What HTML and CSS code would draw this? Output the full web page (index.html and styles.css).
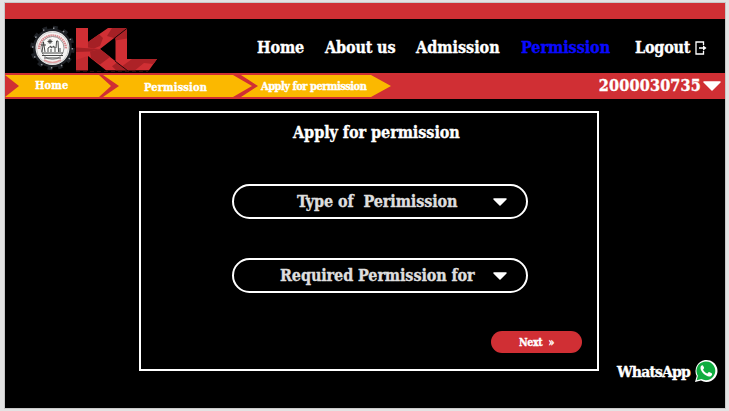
FILE: index.html
```
<!DOCTYPE html>
<html lang="en">
<head>
<meta charset="utf-8">
<title>Apply for permission</title>
<link rel="stylesheet" href="styles.css">
</head>
<body>
<div class="page">
  <div class="strip"></div>
  <header class="header">
    <svg class="logo" width="136" height="52" viewBox="26 20 136 52">
      <g fill="none" stroke="#1e2126"><circle cx="52.500" cy="48" r="17.500" stroke-width="4"/><circle cx="52.500" cy="48" r="20.200" stroke-width="4" stroke-dasharray="4.700 5.870"/></g>
      <circle cx="52.500" cy="48" r="19.800" fill="none" stroke="#92959a" stroke-width="1.400" stroke-dasharray="1.500 8.860"/>
      <circle cx="52.500" cy="48" r="17" fill="#f5f3f2"/>
      <circle cx="52.500" cy="48" r="16" fill="none" stroke="#b8babc" stroke-width=".7"/>
      <path d="M39 49a13.500 13.500 0 0 1 27 0" fill="none" stroke="#d98a8e" stroke-width="2.400" stroke-dasharray="1.500 .6"/>
      <path d="M44 60q8.500 5 17 0" fill="none" stroke="#dc9da0" stroke-width="1.600"/>
      <circle cx="52.500" cy="48" r="11.500" fill="#faf9f8" stroke="#777" stroke-width=".7"/>
      <path d="M42 53h21M42 55.500h21M44 58h17M42 52l1.500-10 1.500 10M41 45h5M48 52v-4l3-2v2l3-2v2h2l.6-7h1.400l.6 11M51 52v-3m4 3v-3m5 3v-4M50 39v5m-2.500-2.500h5M48.300 39.800l3.400 3.400m0-3.400l-3.400 3.400" fill="none" stroke="#343434" stroke-width=".9"/>
      <path d="M76 28h12v14l20-14h19L100 49l27 21.300h-21L88 56v14.300H76z" fill="#d02f34"/>
      <path d="M76 47.500l24 1.500-10 2.500-14 .5z" fill="#a52025"/>
      <path d="M88 42l11-7.700 4 3.700-3 8-6 2.500-6-1zM112 28h15l-13 10-7-2z" fill="#a52025"/>
      <path d="M100 49l10 8-10 7.500L91 58l-1-6.500zM117 62.500l10 7.800h-11l-4-4z" fill="#a52025"/>
      <path d="M76 60l12-4v14.300H76z" fill="#c02b30"/>
      <path d="M115.500 37.500L127 28.500V59h30l-8 11.300h-22L115.500 61.500z" fill="#d02f34"/>
      <path d="M115.500 37.500L127 28.500v10l-11.500 2zM142 59h15l-3.500 5-9.500-1zM132 59h10l2 4-9 7.300h-8l-5-4z" fill="#ad2227"/>
      <path d="M127.500 28L114 38.500M115 61l13 10" fill="none" stroke="#180507" stroke-width=".9"/>
      <path d="M76 71.500h72" stroke="#2a0d10" stroke-width="1" stroke-dasharray="4 3"/>
    </svg>
    <nav class="nav">
      <a class="home">Home</a><a class="about">About us</a><a class="admission">Admission</a><a class="permission">Permission</a><a class="logout">Logout</a>
      <svg class="exit" width="12" height="14" viewBox="0 0 12 14" fill="none" stroke="#fff" stroke-width="1.300"><path d="M8.500 4V1H1v12h7.500v-3M4 7h6"/><path d="M8 4.200L11.500 7 8 9.800z" fill="#fff" stroke="none"/></svg>
    </nav>
  </header>
  <div class="bar">
    <ol class="crumbs">
      <li class="crumb first"><span>Home</span></li>
      <li class="crumb second"><span>Permission</span></li>
      <li class="crumb third"><span>Apply for permission</span></li>
    </ol>
    <div class="user"><span>2000030735</span><svg width="18" height="10" viewBox="0 0 18 10"><path d="M1 1h16L9 9z" fill="#fff" stroke="#fff" stroke-width="1.500" stroke-linejoin="round"/></svg></div>
  </div>
  <main class="panel">
    <h1><span>Apply for permission</span></h1>
    <div class="select type"><span>Type of&nbsp; Perimission</span><svg width="14" height="8" viewBox="0 0 14 8"><path d="M1 1h12L7 7z" fill="#fff" stroke="#fff" stroke-width="1.500" stroke-linejoin="round"/></svg></div>
    <div class="select required"><span>Required Permission for</span><svg width="14" height="8" viewBox="0 0 14 8"><path d="M1 1h12L7 7z" fill="#fff" stroke="#fff" stroke-width="1.500" stroke-linejoin="round"/></svg></div>
    <button class="next">Next&nbsp; »</button>
  </main>
  <div class="whatsapp"><span>WhatsApp</span>
    <svg width="24" height="24" viewBox="0 0 24 24"><path d="M1 23l1.700-6A11 11 0 1 1 7 21.500z" fill="#fff"/><path d="M2.700 21.300l1.200-4.500a9.400 9.400 0 1 1 3.500 3.300z" fill="#10ad40"/><path d="M8.300 6.300c-.7 0-2 1.200-1.800 3 .5 3.700 5 8 8.600 8.200 1.800 0 3-1.200 3-2.600 0-.6-2.700-1.900-3.200-1.800-.6.200-1 1.600-1.600 1.500-1.700-.5-3.500-2.200-4.200-3.800 0-.5 1-1.200 1-1.700 0-.6-1-2.800-1.800-2.800z" fill="#fff"/></svg>
  </div>
</div>
</body>
</html>
```
FILE: styles.css
```
* { box-sizing: border-box; }
body {
  margin: 0;
  padding: 3px 4px 3px 5px;
  height: 411px;
  background: #e3e3e3;
  color: #fff;
  font: bold 16px/20px "DejaVu Serif Condensed", "DejaVu Serif", serif;
  font-stretch: condensed;
  -webkit-text-stroke: .35px currentColor;
  overflow: hidden;
}
.page { position: relative; width: 720px; height: 405px; background: #000; box-shadow: 0 0 0 1px #c8c8c8; }
.strip { height: 16px; background: #d02f34; }
.header { display: flex; height: 54px; padding-left: 21px; }
.logo { margin-top: 1px; flex: none; }
.nav { display: flex; align-items: center; padding: 4px 0 0 95px; white-space: nowrap; letter-spacing: -.15px; }
.nav a { flex: none; }
.home { width: 68px; }
.about { width: 91px; }
.admission { width: 105px; letter-spacing: 0; }
.permission { width: 114px; color: #0a0aff; letter-spacing: -.05px; }
.logout { width: 60px; letter-spacing: -.2px; }
.exit { margin-bottom: 1px; }
.bar { display: flex; justify-content: space-between; height: 26px; background: #d02f34; }
.crumbs { display: flex; margin: 2px 0 0; padding: 0; list-style: none; font-size: 11px; letter-spacing: .15px; }
.crumb { height: 22px; background: #fbb800; white-space: nowrap; line-height: 21px; }
.first { width: 106px; padding-left: 30px; clip-path: polygon(0 0, 94px 0, 106px 50%, 94px 100%, 0 100%, 14px 50%); }
.second { width: 149px; margin-left: -8px; padding: 2px 0 0 41px; clip-path: polygon(0 0, 130px 0, 149px 50%, 130px 100%, 0 100%, 16px 50%); }
.third { width: 150px; margin-left: -11px; padding: 1px 0 0 20px; letter-spacing: -.5px; clip-path: polygon(0 0, 130px 0, 150px 50%, 130px 100%, 0 100%, 17px 50%); }
.user { display: flex; align-items: center; gap: 2px; padding-right: 4px; letter-spacing: .2px; }
.panel { width: 460px; height: 260px; margin: 12px 0 0 134px; border: 2px solid #fff; display: flow-root; }
h1 { margin: 10px 0 0 152px; font: inherit; white-space: nowrap; letter-spacing: -.05px; }
.select { display: flex; align-items: center; justify-content: space-between; width: 296px; height: 35px; margin: 41px 0 0 91px; padding-right: 19px; border: 2px solid #fff; border-radius: 18px; color: #dedede; white-space: nowrap; letter-spacing: -.1px; }
.type { padding-left: 63px; }
.required { margin-top: 39px; padding-left: 46px; }
.next { display: block; width: 91px; height: 22px; margin: 38px 0 0 350px; padding: 0; border: 0; border-radius: 11px; background: #d02f34; color: #fff; font: inherit; font-size: 10.5px; line-height: 20px; letter-spacing: -.3px; }
.whatsapp { position: absolute; right: 7px; bottom: 25px; display: flex; align-items: center; gap: 4px; font-size: 15.500px; letter-spacing: -.8px; }
.whatsapp span { padding-top: 2px; }
```
